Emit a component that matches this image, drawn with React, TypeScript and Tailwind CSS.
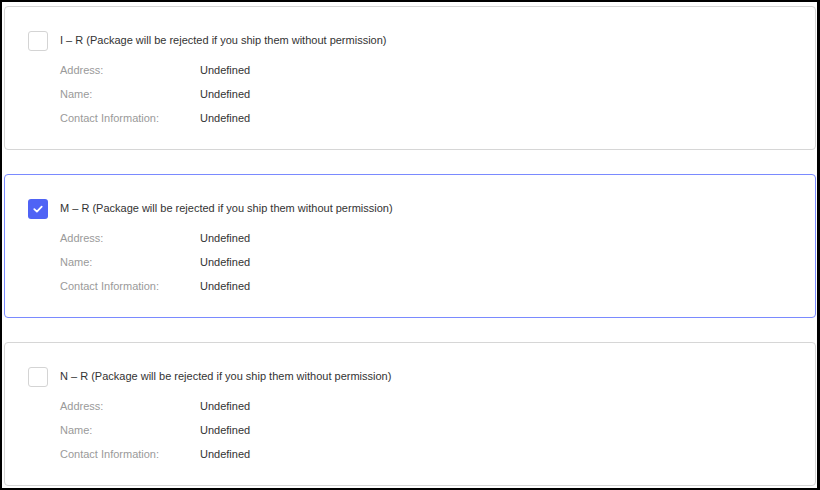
import {useState} from "react";

interface IShipment {
    code: string
    address: string
    name: string
    contact: string
}

const shipments: IShipment[] = [
    {code: "I – R", address: "Undefined", name: "Undefined", contact: "Undefined"},
    {code: "M – R", address: "Undefined", name: "Undefined", contact: "Undefined"},
    {code: "N – R", address: "Undefined", name: "Undefined", contact: "Undefined"},
]

function Checkbox({checked}: { checked: boolean }) {
    if (checked) {
        return (
            <div className="w-5 h-5 shrink-0 rounded-[3px] bg-[#4f63f5] flex items-center justify-center">
                <svg width="12" height="12" viewBox="0 0 12 12" fill="none">
                    <path d="M2.3 6.2 L4.9 8.6 L9.7 3.6" stroke="white" strokeWidth="1.8" strokeLinecap="round"
                          strokeLinejoin="round"/>
                </svg>
            </div>
        )
    }
    return <div className="w-5 h-5 shrink-0 rounded-[3px] border border-[#d4d4d4] bg-white"/>
}

function ShipmentCard({item, selected, onSelect}: { item: IShipment, selected: boolean, onSelect: () => void }) {
    const rows = [
        ["Address:", item.address],
        ["Name:", item.name],
        ["Contact Information:", item.contact],
    ]
    return (
        <div
            onClick={onSelect}
            className={selected
                ? "h-[144px] rounded-[4px] border border-[#7a8aff] bg-white pl-[23px] pt-[24px] cursor-pointer"
                : "h-[144px] rounded-[4px] border border-[#d6d6d6] bg-white pl-[23px] pt-[24px] cursor-pointer"}
        >
            <div className="flex items-center gap-3 h-5">
                <Checkbox checked={selected}/>
                <span className="text-[11px] leading-4 text-[#333] -mt-[2px]">
                    {item.code} (Package will be rejected if you ship them without permission)
                </span>
            </div>
            <div className="mt-[7px] pl-8">
                {rows.map(([label, value]) => (
                    <div key={label} className="flex items-center h-6 text-[11px]">
                        <span className="w-[140px] text-[#9a9a9a]">{label}</span>
                        <span className="text-[#333]">{value}</span>
                    </div>
                ))}
            </div>
        </div>
    )
}

export default function App() {
    const [selected, setSelected] = useState(1)

    return (
        <div className="w-[820px] h-[490px] bg-white border-l-2 border-t-2 border-r-[3px] border-b-2 border-black pl-[2px] pr-px pt-1 flex flex-col gap-6"
             style={{fontFamily: '"Liberation Sans", Arial, sans-serif'}}>
            {shipments.map((item, index) => (
                <ShipmentCard key={index} item={item} selected={selected === index}
                              onSelect={() => setSelected(index)}/>
            ))}
        </div>
    )
}
